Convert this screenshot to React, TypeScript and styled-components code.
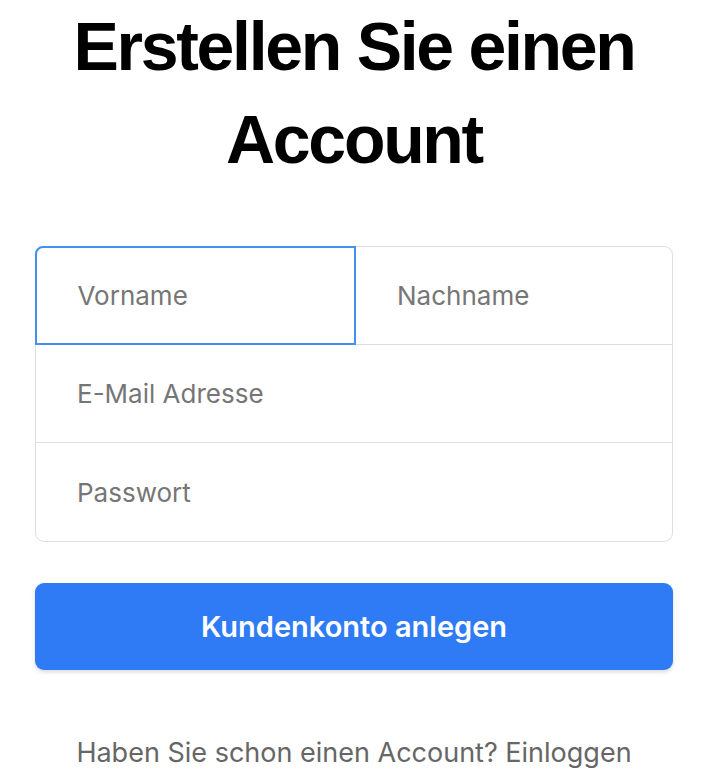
import React from 'react';
import styled, { createGlobalStyle } from 'styled-components';

const GlobalStyle = createGlobalStyle`
  body {
    margin: 0;
    background: #ffffff;
    font-family: "Inter", "Liberation Sans", sans-serif;
  }
`;

const Page = styled.div`
  width: 704px;
  padding: 0 31px 0 35px;
  box-sizing: border-box;
  display: flex;
  flex-direction: column;
`;

const Title = styled.h1`
  margin: 0;
  font-family: "Liberation Sans", Arial, sans-serif;
  font-weight: 700;
  font-size: 68px;
  line-height: 93px;
  letter-spacing: -2.3px;
  text-align: center;
  color: #000;
`;

const Form = styled.div`
  margin-top: 60px;
  border: 1.5px solid #dcdfe3;
  border-radius: 9px;
  display: grid;
  grid-template-columns: 320px 1fr;
  grid-auto-rows: 98px;
`;

const Field = styled.div<{ $focused?: boolean; $wide?: boolean; $last?: boolean }>`
  grid-column: ${(p) => (p.$wide ? '1 / span 2' : 'auto')};
  display: flex;
  align-items: center;
  padding-left: 41px;
  font-size: 26px;
  color: #767676;
  border-bottom: ${(p) => (p.$last ? 'none' : '1.5px solid #dcdfe3')};
  box-sizing: border-box;
  ${(p) =>
    p.$focused &&
    `
    border: 2px solid #4390ee;
    border-top-left-radius: 8px;
    margin: -1.5px 0 0 -1.5px;
    padding-left: 41px;
  `}
`;

const Button = styled.button`
  margin-top: 41px;
  height: 87px;
  border: none;
  border-radius: 9px;
  background: #2f7bf5;
  color: #fff;
  font-family: "Inter", "Liberation Sans", sans-serif;
  font-weight: 600;
  font-size: 29px;
  box-shadow: 0 2px 4px rgba(0, 0, 0, 0.15);
`;

const Footer = styled.p`
  margin: 66px 0 0;
  text-align: center;
  font-size: 27px;
  color: #666;
`;

export default function App() {
  return (
    <>
      <GlobalStyle />
      <Page>
        <Title>Erstellen Sie einen Account</Title>
        <Form>
          <Field $focused>Vorname</Field>
          <Field>Nachname</Field>
          <Field $wide>E-Mail Adresse</Field>
          <Field $wide $last>Passwort</Field>
        </Form>
        <Button>Kundenkonto anlegen</Button>
        <Footer>Haben Sie schon einen Account? Einloggen</Footer>
      </Page>
    </>
  );
}
